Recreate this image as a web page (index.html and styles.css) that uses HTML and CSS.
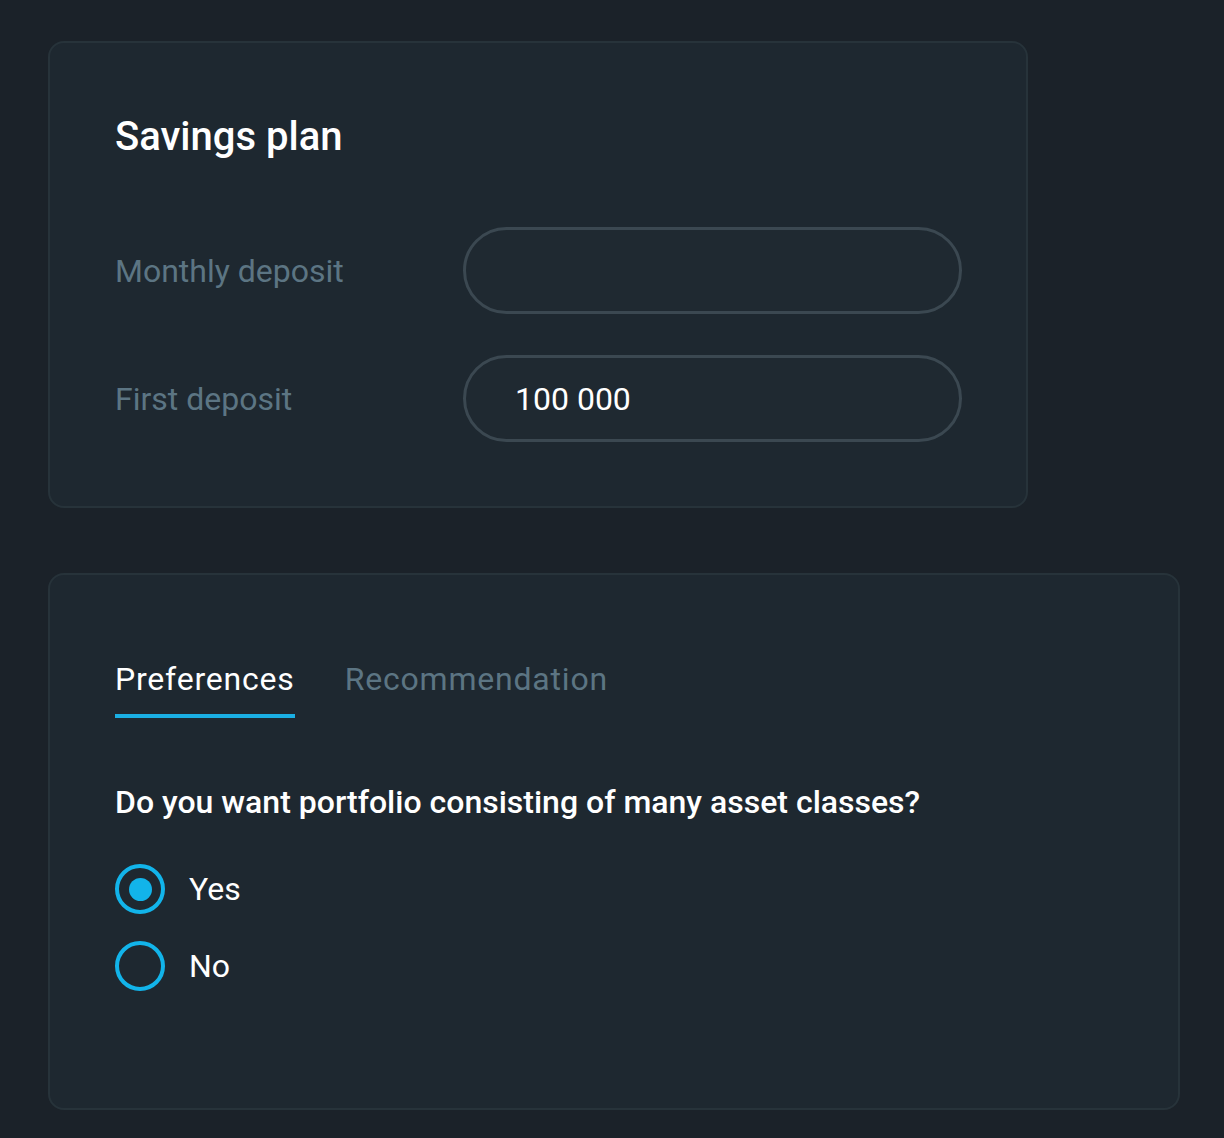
FILE: index.html
```html
<!DOCTYPE html>
<html lang="en">
<head>
<meta charset="utf-8">
<title>Savings plan</title>
<link rel="stylesheet" href="styles.css">
</head>
<body>
<main class="page">
  <section class="card card-plan">
    <h1 class="card-title">Savings plan</h1>
    <div class="field-row">
      <label class="field-label" for="monthly">Monthly deposit</label>
      <input class="field-input" id="monthly" type="text" value="">
    </div>
    <div class="field-row">
      <label class="field-label" for="first">First deposit</label>
      <input class="field-input" id="first" type="text" value="100 000">
    </div>
  </section>

  <section class="card card-prefs">
    <nav class="tabs">
      <span class="tab tab-active">Preferences</span>
      <span class="tab">Recommendation</span>
    </nav>
    <h2 class="question">Do you want portfolio consisting of many asset classes?</h2>
    <div class="radios">
      <label class="radio-row">
        <span class="radio radio-checked"></span>
        <span class="radio-label">Yes</span>
      </label>
      <label class="radio-row">
        <span class="radio"></span>
        <span class="radio-label">No</span>
      </label>
    </div>
  </section>
</main>
</body>
</html>
```
FILE: styles.css
```css
html, body {
  margin: 0;
  padding: 0;
  background: #1b2229;
}

body {
  font-family: Roboto, "Liberation Sans", Arial, sans-serif;
  color: #ffffff;
}

.page {
  display: flex;
  flex-direction: column;
  align-items: flex-start;
  gap: 65px;
  padding: 41px 0 0 48px;
}

.card {
  box-sizing: border-box;
  background: #1e2830;
  border: 2px solid #27333a;
  border-radius: 16px;
  padding: 64px 64px 64px 65px;
}

.card-plan {
  width: 980px;
}

.card-prefs {
  width: 1132px;
  height: 537px;
}

.card-title {
  margin: 8px 0 68px 0;
  font-size: 40px;
  line-height: 44px;
  font-weight: 500;
  color: #ffffff;
}

.field-row {
  display: flex;
  align-items: center;
}

.field-row + .field-row {
  margin-top: 41px;
}

.field-label {
  width: 348px;
  flex: none;
  font-size: 32px;
  color: #5c7583;
}

.field-input {
  box-sizing: border-box;
  flex: 1;
  height: 87px;
  border: 3px solid #3b4851;
  border-radius: 44px;
  background: #1f2931;
  color: #ffffff;
  font-family: Roboto, "Liberation Sans", Arial, sans-serif;
  font-size: 32px;
  padding: 0 0 0 49px;
  outline: none;
}

.tabs {
  display: flex;
  gap: 50px;
  margin-top: 21px;
}

.tab {
  font-size: 32px;
  line-height: 38px;
  letter-spacing: 0.8px;
  color: #5c7583;
  padding-bottom: 16px;
  border-bottom: 4px solid transparent;
}

.tab-active {
  color: #ffffff;
  border-bottom-color: #1aafe3;
}

.question {
  margin: 65px 0 0 0;
  font-size: 32px;
  line-height: 38px;
  font-weight: 500;
  color: #ffffff;
}

.radios {
  display: flex;
  flex-direction: column;
  gap: 27px;
  margin-top: 43px;
}

.radio-row {
  display: flex;
  align-items: center;
  gap: 24px;
}

.radio {
  box-sizing: border-box;
  width: 50px;
  height: 50px;
  border: 4px solid #12b4ea;
  border-radius: 50%;
  display: flex;
  align-items: center;
  justify-content: center;
}

.radio-checked::after {
  content: "";
  width: 23px;
  height: 23px;
  border-radius: 50%;
  background: #12b4ea;
}

.radio-label {
  font-size: 32px;
  color: #ffffff;
}
```
